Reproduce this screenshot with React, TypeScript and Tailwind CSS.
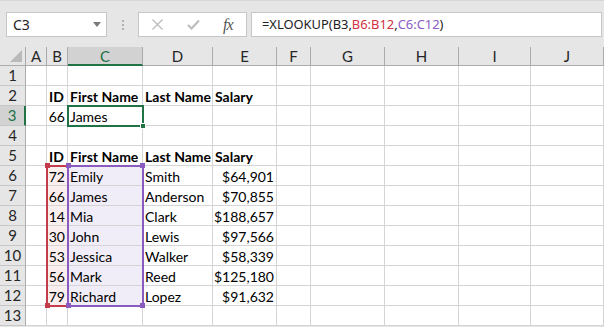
import React from "react";

const COLS = ["", "A", "B", "C", "D", "E", "F", "G", "H", "I", "J"];
const ids = ["72", "66", "14", "30", "53", "56", "79"];
const firsts = ["Emily", "James", "Mia", "John", "Jessica", "Mark", "Richard"];
const lasts = ["Smith", "Anderson", "Clark", "Lewis", "Walker", "Reed", "Lopez"];
const sals = ["$64,901", "$70,855", "$188,657", "$97,566", "$58,339", "$125,180", "$91,632"];

type Cell = { t: string; b?: boolean; r?: boolean };

function cellAt(row: number, col: number): Cell | null {
  const hdr: Record<number, string> = { 2: "ID", 3: "First Name", 4: "Last Name", 5: "Salary" };
  if ((row === 2 || row === 5) && hdr[col]) return { t: hdr[col], b: true };
  if (row === 3 && col === 2) return { t: "66", r: true };
  if (row === 3 && col === 3) return { t: "James" };
  if (row >= 6 && row <= 12) {
    const i = row - 6;
    if (col === 2) return { t: ids[i], r: true };
    if (col === 3) return { t: firsts[i] };
    if (col === 4) return { t: lasts[i] };
    if (col === 5) return { t: sals[i], r: true };
  }
  return null;
}

export default function App() {
  const rows = Array.from({ length: 13 }, (_, i) => i + 1);
  return (
    <div
      className="relative w-[604px] h-[327px] overflow-hidden bg-[#e6e6e6] flex flex-col"
      style={{ fontFamily: "Lato, 'Liberation Sans', sans-serif" }}
    >
      {/* formula bar area */}
      <div className="h-[47px] shrink-0 pt-[11px] flex items-start border-t border-[#d6d6d6]">
        <div className="ml-[6px] w-[101px] h-[25px] bg-white border border-[#c6c6c6] flex items-center justify-between pl-[6px] pr-[5px]">
          <span className="text-[14px] text-[#222]" style={{ fontFamily: "'Noto Sans', sans-serif" }}>C3</span>
          <svg width="8" height="5" viewBox="0 0 8 5"><polygon points="0,0 8,0 4,5" fill="#7a7a7a" /></svg>
        </div>
        <div className="w-[31px] h-[25px] flex flex-col items-center justify-center gap-[2px]">
          <div className="w-[2px] h-[2px] bg-[#b0b0b0]" />
          <div className="w-[2px] h-[2px] bg-[#b0b0b0]" />
          <div className="w-[2px] h-[2px] bg-[#b0b0b0]" />
        </div>
        <div className="w-[109px] h-[25px] bg-white border border-[#c6c6c6] flex items-center">
          <svg className="ml-[13px]" width="11" height="11" viewBox="0 0 11 11">
            <path d="M0.5 0.5 L10.5 10.5 M10.5 0.5 L0.5 10.5" stroke="#bdbdbd" strokeWidth="1.4" />
          </svg>
          <svg className="ml-[24px]" width="13" height="11" viewBox="0 0 13 11">
            <path d="M1 6 L4.5 9.5 L12 1.5" stroke="#bdbdbd" strokeWidth="2.2" fill="none" />
          </svg>
          <span
            className="ml-[23px] text-[16px] italic text-[#555] tracking-[-1px]"
            style={{ fontFamily: "'Liberation Serif', serif" }}
          >
            fx
          </span>
        </div>
        <div
          className="ml-[4px] mr-[2px] flex-1 h-[25px] bg-white border border-[#c6c6c6] flex items-center pl-[10px] text-[12.9px] text-[#222]"
          style={{ fontFamily: "'Noto Sans', sans-serif" }}
        >
          <span>=XLOOKUP(B3,</span>
          <span className="text-[#d0323f]">B6:B12</span>
          <span>,</span>
          <span className="text-[#8b5cc4]">C6:C12</span>
          <span>)</span>
        </div>
      </div>

      {/* grid */}
      <div className="grid grid-cols-[26px_21px_21px_75px_70px_64px_34px_74px_74px_72px_73px] grid-rows-[19px_repeat(13,20px)] text-[14px]">
        {COLS.map((c, ci) => {
          if (ci === 0)
            return (
              <div key="corner" className="relative border-r border-b border-[#ababab] bg-[#e6e6e6]">
                <svg className="absolute right-[3px] bottom-[3px]" width="12" height="12" viewBox="0 0 12 12">
                  <polygon points="12,0 12,12 0,12" fill="#b9b9b9" />
                </svg>
              </div>
            );
          const active = c === "C";
          return (
            <div
              key={c}
              className={
                active
                  ? "flex items-center justify-center bg-[#d2d2d2] border-r border-[#ababab] border-b-2 border-b-[#217346] text-[#217346] text-[15px] leading-[18px]"
                  : "flex items-center justify-center bg-[#e6e6e6] border-r border-[#ababab] border-b border-b-[#ababab] text-[#262626] text-[15px] leading-[18px]"
              }
            >
              {c}
            </div>
          );
        })}
        {rows.map((r) =>
          COLS.map((c, ci) => {
            if (ci === 0) {
              const active = r === 3;
              return (
                <div
                  key={`h${r}`}
                  className={
                    active
                      ? "flex items-center justify-center bg-[#d2d2d2] border-b border-[#c6c6c6] border-r-2 border-r-[#217346] text-[#217346] text-[15px] leading-[19px]"
                      : "flex items-center justify-center bg-[#e6e6e6] border-b border-[#c6c6c6] border-r border-r-[#ababab] text-[#262626] text-[15px] leading-[19px]"
                  }
                >
                  {r}
                </div>
              );
            }
            const cell = cellAt(r, ci);
            const inRed = ci === 2 && r >= 6 && r <= 12;
            const inPurple = ci === 3 && r >= 6 && r <= 12;
            const bg = inRed ? "bg-[#fbeeee]" : inPurple ? "bg-[#f0ecf8]" : "bg-white";
            return (
              <div
                key={`${r}-${ci}`}
                className={`${bg} border-r border-b border-[#d4d4d4] flex items-start pt-[1px] leading-[19px] px-[2px] whitespace-nowrap overflow-visible text-black ${
                  cell?.r ? "justify-end" : "justify-start"
                } ${cell?.b ? "font-bold" : ""}`}
              >
                {cell ? cell.t : null}
              </div>
            );
          })
        )}
      </div>

      {/* red range B6:B12 */}
      <div className="absolute left-[46px] top-[165px] w-[23px] h-[142px] border-2 border-[#c43b4b]" />
      <div className="absolute left-[45px] top-[163px] w-[5px] h-[5px] bg-[#c43b4b]" />
      <div className="absolute left-[45px] top-[303px] w-[5px] h-[5px] bg-[#c43b4b]" />

      {/* purple range C6:C12 */}
      <div className="absolute left-[67px] top-[165px] w-[77px] h-[142px] border-2 border-[#8a5cc0]" />
      <div className="absolute left-[66px] top-[163px] w-[5px] h-[5px] bg-[#8a5cc0]" />
      <div className="absolute left-[140px] top-[163px] w-[5px] h-[5px] bg-[#8a5cc0]" />
      <div className="absolute left-[66px] top-[303px] w-[5px] h-[5px] bg-[#8a5cc0]" />
      <div className="absolute left-[140px] top-[303px] w-[5px] h-[5px] bg-[#8a5cc0]" />

      {/* active cell C3 */}
      <div className="absolute left-[67px] top-[105px] w-[77px] h-[22px] border-2 border-[#217346]" />
      <div className="absolute left-[140px] top-[123px] w-[6px] h-[6px] bg-[#217346] border border-white" />
    </div>
  );
}
